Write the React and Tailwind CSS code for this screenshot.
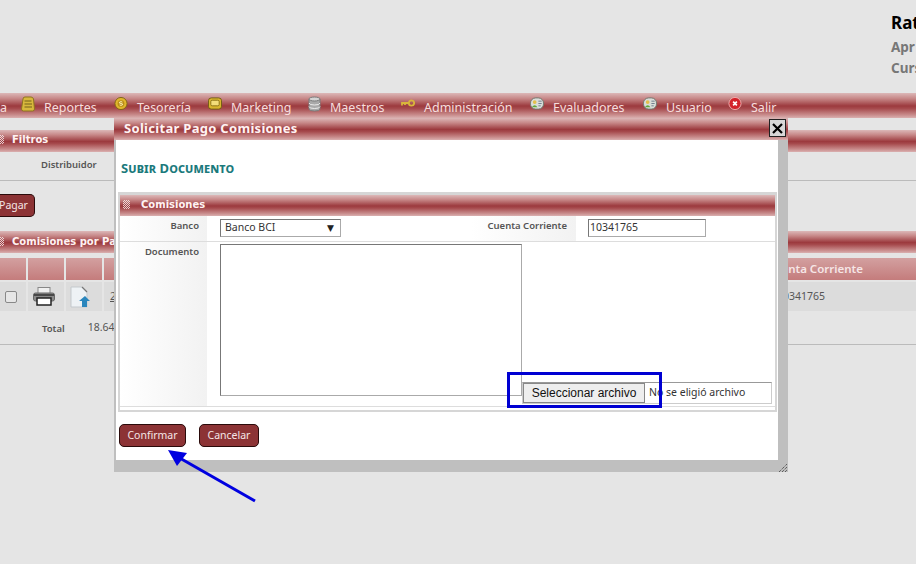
import React from "react";

const bar =
  "bg-[linear-gradient(to_bottom,#dcb8b8_0%,#c78888_22%,#9c3a3e_52%,#a64a4d_62%,#c98d8d_88%,#dab0b0_100%)]";
const btn =
  "h-[23px] rounded-[5px] border border-[#2a0a0a] bg-[#8c3335] text-[#f5e6e6] text-[10.5px] flex items-center justify-center";
const dots =
  "bg-[conic-gradient(#ffffffbb_25%,transparent_0_50%,#ffffffbb_0_75%,transparent_0)] bg-[length:2px_2px]";
const label = "text-[9.5px] font-semibold text-[#555]";
const headCell = "bg-[linear-gradient(to_bottom,#d3a0a0,#c47c7c)]";

function Sheet() {
  return (
    <svg width="14" height="16" viewBox="0 0 14 16">
      <path d="M2 3q0-2 2-2h6q2 0 2.500 2l1 10q0 2-2 2H2.500q-2 0-2-2z" fill="#d8b83c" stroke="#8d7420" />
      <path d="M3.500 5h7M3.500 8h7.500M3.500 11h7.500" stroke="#75601a" strokeWidth="1.200" />
    </svg>
  );
}

function Coin() {
  return (
    <svg width="15" height="15" viewBox="0 0 15 15">
      <circle cx="7.500" cy="7.500" r="6.500" fill="#e0b52c" stroke="#7d6414" />
      <circle cx="7.500" cy="7.500" r="3.600" fill="#b98c14" />
      <path d="M9 6q-1.500-1-3 0t1.500 1.500 1.500 1.500-3 0" fill="none" stroke="#fff4c0" />
    </svg>
  );
}

function Screen() {
  return (
    <svg width="15" height="13" viewBox="0 0 15 13">
      <rect x="0.500" y="0.500" width="14" height="12" rx="3" fill="#d9b52e" stroke="#6f5a12" />
      <rect x="3" y="3" width="9" height="6" rx="1.500" fill="#f3dd7a" stroke="#8a7016" />
    </svg>
  );
}

function Database() {
  return (
    <svg width="13" height="16" viewBox="0 0 13 16">
      <path d="M1 3v10q0 2 5.500 2t5.500-2V3z" fill="#a9a9a9" stroke="#7b7b7b" />
      <ellipse cx="6.500" cy="3" rx="5.500" ry="2" fill="#d4d4d4" stroke="#7b7b7b" />
      <path d="M1 7q0 2 5.500 2t5.500-2M1 10.500q0 2 5.500 2t5.500-2" fill="none" stroke="#ececec" />
    </svg>
  );
}

function Key() {
  return (
    <svg width="14" height="9" viewBox="0 0 14 9">
      <circle cx="10.500" cy="4" r="2.700" fill="none" stroke="#d8b63a" strokeWidth="1.800" />
      <path d="M8 4H1v2.500M4 4v2" fill="none" stroke="#d8b63a" strokeWidth="1.800" />
    </svg>
  );
}

function Card() {
  return (
    <svg width="15" height="13" viewBox="0 0 15 13">
      <rect x="0.500" y="0.500" width="14" height="12" rx="5.500" fill="#d9ddd9" stroke="#6f7a6f" />
      <circle cx="5" cy="5" r="2" fill="#e3c04a" />
      <path d="M2 10.500q3-4.500 6 0z" fill="#5fa83a" />
      <path d="M9 4h3.500M9 6.500h3.500M9 9h2.500" stroke="#6a7a8a" />
    </svg>
  );
}

function Stop() {
  return (
    <svg width="15" height="15" viewBox="0 0 15 15">
      <circle cx="7.500" cy="7.500" r="6.500" fill="#d3222a" stroke="#f0b0b0" />
      <path d="M5.500 5.500l4 4M9.500 5.500l-4 4" stroke="#fff" strokeWidth="1.800" />
    </svg>
  );
}

function Printer() {
  return (
    <svg width="22" height="19" viewBox="0 0 22 19">
      <rect x="5" y="0.500" width="12" height="6" fill="#f0f0f0" stroke="#888" />
      <rect x="0.500" y="6" width="21" height="8" rx="2" fill="#8a8a8a" stroke="#666" />
      <rect x="4" y="11" width="14" height="7" fill="#fff" stroke="#222" strokeWidth="1.500" />
      <path d="M1 8h20" stroke="#333" strokeWidth="1.500" />
    </svg>
  );
}

function UploadFile() {
  return (
    <svg width="22" height="22" viewBox="0 0 22 22">
      <path d="M1 1h11l5 5v15H1z" fill="#eef2f5" stroke="#c4c9cd" />
      <path d="M12 1l5 5" stroke="#777" strokeWidth="1.200" />
      <path d="M15 10l5 5h-3v6h-5v-6H9z" fill="#2a86bd" />
    </svg>
  );
}

function SectionBar({ title, className, gripClass }) {
  return (
    <div className={`${bar} flex items-center ${className}`}>
      <div className={`${dots} w-[7px] h-[9px] ${gripClass}`} />
      <span className="text-[10px] font-bold text-[#fff3f3] font-['DejaVu_Sans',sans-serif]">{title}</span>
    </div>
  );
}

const menu = [
  { icon: <Sheet />, text: "Reportes", w: "w-[54px]" },
  { icon: <Coin />, text: "Tesorería", w: "w-[55px]" },
  { icon: <Screen />, text: "Marketing", w: "w-[60px]" },
  { icon: <Database />, text: "Maestros", w: "w-[55px]" },
  { icon: <Key />, text: "Administración", w: "w-[90px]" },
  { icon: <Card />, text: "Evaluadores", w: "w-[74px]" },
  { icon: <Card />, text: "Usuario", w: "w-[46px]" },
  { icon: <Stop />, text: "Salir", w: "w-[26px]" },
];

function Background() {
  return (
    <>
      {/* Header */}
      <div className="h-[93px] pl-[891px] pt-[13px] overflow-hidden whitespace-nowrap">
        <div className="text-[17px] font-bold text-black leading-[20px]">Rat</div>
        <div className="text-[13.5px] font-bold text-[#777] leading-[16px] mt-[6px]">Apr</div>
        <div className="text-[13.5px] font-bold text-[#777] leading-[16px] mt-[5px]">Curs</div>
      </div>

      {/* Menu */}
      <nav className={`${bar} h-[25px] flex items-center overflow-hidden`}>
        <span className="w-[21px] text-[12.5px] text-[#f6dede] pt-[5px]">a</span>
        {menu.map((m) => (
          <div key={m.text} className="flex items-center mr-[16px]">
            <span className="w-[14px] h-[17px] flex items-center justify-center -mt-[4px]">{m.icon}</span>
            <span className={`ml-[9px] ${m.w} text-[12.5px] leading-[16px] pt-[5px] text-[#f6dede] whitespace-nowrap`}>{m.text}</span>
          </div>
        ))}
      </nav>

      {/* Filtros */}
      <SectionBar title="Filtros" className="h-[22px] mt-[12px] pb-[3px]" gripClass="-ml-[3px] mr-[8px]" />
      <div className={`h-[29px] border-b border-[#bbb] pl-[41px] pt-[7px] leading-[12px] ${label}`}>
        Distribuidor
      </div>
      <div className={`${btn} w-[35px] mt-[13px] pr-[7px] rounded-l-none border-l-0`}>Pagar</div>

      {/* Comisiones por pagar */}
      <SectionBar title="Comisiones por Pagar" className="h-[22px] mt-[14px] pb-[2px]" gripClass="-ml-[3px] mr-[8px]" />
      <div className="mt-[5px] flex gap-[2px] h-[22px]">
        <div className={`w-[26px] ${headCell}`} />
        <div className={`w-[36px] ${headCell}`} />
        <div className={`w-[36px] ${headCell}`} />
        <div className={`flex-1 ${headCell} flex justify-end items-center pr-[53px]`}>
          <span className="text-[11.5px] font-semibold text-[#f6e6e6]">Cuenta Corriente</span>
        </div>
      </div>
      <div className="mt-[2px] flex gap-[2px] h-[29px] items-stretch">
        <div className="w-[26px] bg-[#dcdcdc] flex items-center justify-center pr-[4px]">
          <div className="w-[12px] h-[12px] rounded-[2px] border border-[#888] bg-[#e6e6e6]" />
        </div>
        <div className="w-[36px] bg-[#dcdcdc] flex items-center justify-center pr-[4px]"><Printer /></div>
        <div className="w-[36px] bg-[#dcdcdc] flex items-center justify-center pr-[6px]"><UploadFile /></div>
        <div className="flex-1 bg-[#dcdcdc] flex items-center justify-between px-[6px] text-[10.5px] text-[#555]">
          <span className="underline">2</span>
          <span className="mr-[85px]">10341765</span>
        </div>
      </div>
      <div className="h-[34px] border-b border-[#bbb] flex items-center">
        <span className={`${label} ml-[42px] mt-[4px]`}>Total</span>
        <span className="ml-[23px] text-[10.5px] text-[#555]">18.64</span>
      </div>
    </>
  );
}

function Modal() {
  return (
    <div className="absolute left-[114px] top-[118px] w-[674px] h-[354px] bg-[#bfbfbf] flex flex-col">
      <div className={`${bar} h-[22px] shrink-0 flex items-center pl-[10px] relative`}>
        <span className="text-[13px] font-bold text-[#fff3f3] tracking-[0.3px]">Solicitar Pago Comisiones</span>
        <div className="absolute left-[655px] top-[1px] w-[17px] h-[18px] bg-[#d8d8d8] border border-[#222] flex items-center justify-center">
          <svg width="11" height="11" viewBox="0 0 11 11">
            <path d="M1 1l9 9M10 1l-9 9" stroke="#000" strokeWidth="2.200" />
          </svg>
        </div>
      </div>

      <div className="ml-[2px] w-[662px] h-[320px] bg-white pl-[2px] shrink-0">
        <h2 className="pt-[20px] pl-[3px] text-[13px] leading-[16px] font-bold text-[#1b7a7c] tracking-[0.1px] [font-variant:small-caps]">
          Subir Documento
        </h2>

        <div className="mt-[16px] w-[659px] h-[220px] border-2 border-t-[3px] border-[#d6d6d6] flex flex-col">
          <SectionBar title="Comisiones" className="h-[21px] shrink-0 pl-[3px] pb-[2px]" gripClass="mr-[11px]" />

          <div className="h-[26px] flex border-b border-[#ddd] shrink-0">
            <div className={`${label} w-[87px] bg-[linear-gradient(to_right,#ffffff,#f2f2f2)] text-right pr-[8px] pt-[3px]`}>Banco</div>
            <div className="w-[264px] pl-[13px] pt-[3px]">
              <div className="w-[121px] h-[18px] border border-[#aaa] border-t-[#777] border-l-[#777] flex items-center justify-between pl-[4px] pr-[6px] text-[10.5px] text-[#333]">
                <span>Banco BCI</span>
                <span className="text-[9px] text-[#222]">▼</span>
              </div>
            </div>
            <div className={`${label} w-[105px] bg-[linear-gradient(to_right,#ffffff,#f2f2f2)] text-right pr-[9px] pt-[3px] whitespace-nowrap`}>Cuenta Corriente</div>
            <div className="pl-[12px] pt-[3px]">
              <div className="w-[118px] h-[18px] border border-[#aaa] border-t-[#777] border-l-[#777] flex items-center pl-[1px] text-[10.5px] text-[#333]">10341765</div>
            </div>
          </div>

          <div className="flex-1 flex mb-[3px] border-b border-[#ddd]">
            <div className={`${label} w-[87px] bg-[linear-gradient(to_right,#ffffff,#f2f2f2)] text-right pr-[8px] pt-[3px]`}>Documento</div>
            <div className="pl-[13px] pt-[2px]">
              <div className="w-[302px] h-[152px] border border-[#aaa] border-t-[#777] border-l-[#777]" />
            </div>
            <div className="self-end mb-[2px] flex items-stretch w-[250px] h-[22px] border border-[#ccc] border-t-[#999]">
              <div className="w-[122px] bg-[#eeeeee] border border-[#888] flex items-center justify-center text-[12px] text-[#111] font-['Liberation_Sans',sans-serif]">
                Seleccionar archivo
              </div>
              <span className="ml-[4px] self-center text-[10.5px] text-[#333] whitespace-nowrap">No se eligió archivo</span>
            </div>
          </div>
        </div>

        <div className="mt-[12px] flex gap-[13px] pl-[1px]">
          <div className={`${btn} w-[67px]`}>Confirmar</div>
          <div className={`${btn} w-[60px]`}>Cancelar</div>
        </div>
      </div>

      <svg className="absolute right-[1px] bottom-0" width="8" height="8" viewBox="0 0 8 8">
        <path d="M0 8l8-8M3 8l5-5M6 8l2-2" stroke="#333" strokeWidth="1" strokeDasharray="1 1" />
      </svg>
    </div>
  );
}

export default function App() {
  return (
    <div className="relative w-[916px] h-[564px] overflow-hidden bg-[#e5e5e5] font-['Noto_Sans','DejaVu_Sans',sans-serif]">
      <Background />
      <Modal />

      {/* Blue annotations */}
      <div className="absolute left-[507px] top-[372px] w-[155px] h-[36px] border-[3px] border-[#0000d2]" />
      <svg className="absolute left-[160px] top-[445px]" width="100" height="62" viewBox="0 0 100 62">
        <path d="M95 56L18 12" stroke="#0000e0" strokeWidth="3" />
        <path d="M8 5L27 8L17 21z" fill="#0000e0" />
      </svg>
    </div>
  );
}
